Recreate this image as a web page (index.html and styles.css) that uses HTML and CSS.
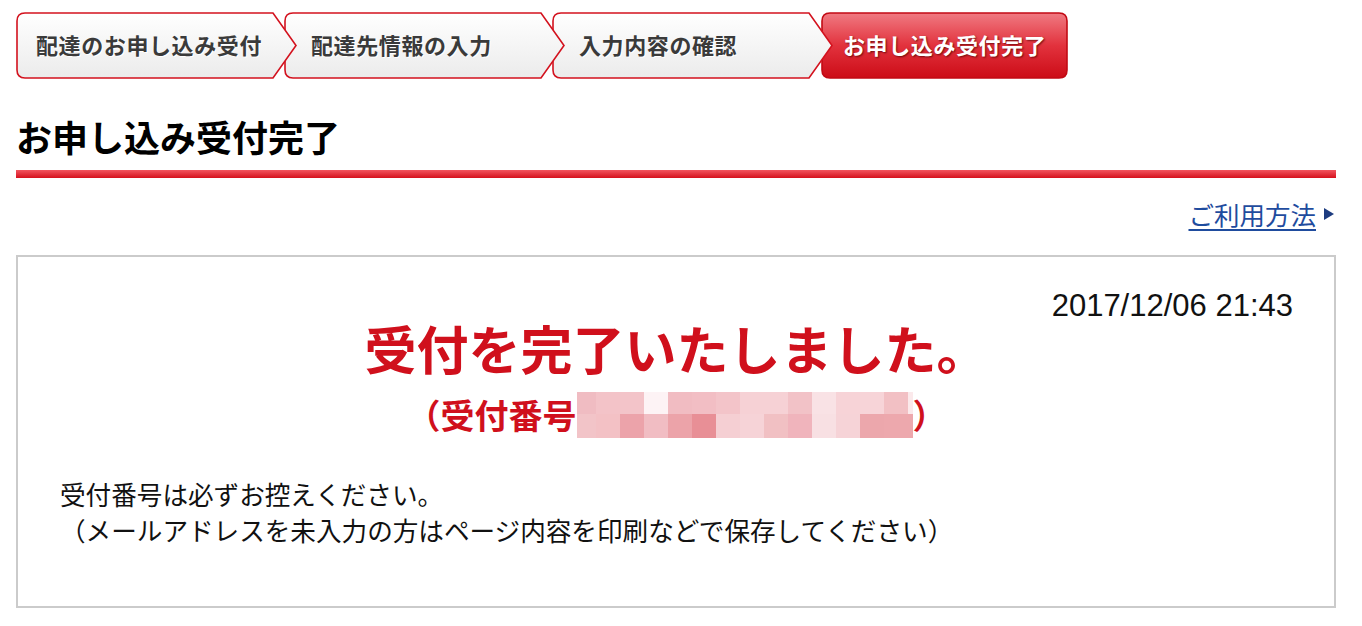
FILE: index.html
```html
<!DOCTYPE html>
<html lang="ja">
<head>
    <meta charset="UTF-8">
    <meta name="viewport" content="width=device-width, initial-scale=1.0">
    <title>お申し込み受付完了</title>
    <link rel="stylesheet" href="styles.css">
</head>
<body>
    <svg class="defs" width="0" height="0" aria-hidden="true">
        <defs>
            <linearGradient id="stepGray" x1="0" y1="0" x2="0" y2="1">
                <stop offset="0" stop-color="#ffffff"/>
                <stop offset="1" stop-color="#ebebeb"/>
            </linearGradient>
            <linearGradient id="stepRed" x1="0" y1="0" x2="0" y2="1">
                <stop offset="0" stop-color="#f07a82"/>
                <stop offset="0.5" stop-color="#e2323d"/>
                <stop offset="1" stop-color="#cc0c17"/>
            </linearGradient>
        </defs>
    </svg>
    <div class="page">
        <ol class="steps">
            <li class="step">
                <svg class="step-bg" viewBox="0 0 281 67" preserveAspectRatio="none"><path d="M9 1H257L280 33.5L257 66H9Q1 66 1 58V9Q1 1 9 1Z" fill="url(#stepGray)" stroke="#d3121e" stroke-width="1.6"/></svg>
                配達のお申し込み受付
            </li>
            <li class="step">
                <svg class="step-bg" viewBox="0 0 281 67" preserveAspectRatio="none"><path d="M9 1H257L280 33.5L257 66H9Q1 66 1 58V9Q1 1 9 1Z" fill="url(#stepGray)" stroke="#d3121e" stroke-width="1.6"/></svg>
                配達先情報の入力
            </li>
            <li class="step">
                <svg class="step-bg" viewBox="0 0 281 67" preserveAspectRatio="none"><path d="M9 1H257L280 33.5L257 66H9Q1 66 1 58V9Q1 1 9 1Z" fill="url(#stepGray)" stroke="#d3121e" stroke-width="1.6"/></svg>
                入力内容の確認
            </li>
            <li class="step current">
                <svg class="step-bg" viewBox="0 0 247 67" preserveAspectRatio="none"><path d="M9 1H238Q246 1 246 9V58Q246 66 238 66H9Q1 66 1 58V9Q1 1 9 1Z" fill="url(#stepRed)" stroke="#c20a14" stroke-width="1.6"/></svg>
                お申し込み受付完了
            </li>
        </ol>

        <h1 class="title">お申し込み受付完了</h1>

        <div class="help">
            <a href="#">ご利用方法</a>
            <span class="tri"></span>
        </div>

        <div class="box">
            <p class="date">2017/12/06 21:43</p>
            <p class="done">受付を完了いたしました。</p>
            <p class="number">（受付番号<svg class="mosaic" width="336" height="46" viewBox="0 0 336 46">
                <rect x="0" y="0" width="19" height="22" fill="#f0bcc2"/>
                <rect x="19" y="0" width="24" height="22" fill="#f3c3c8"/>
                <rect x="43" y="0" width="24" height="22" fill="#f3c4c9"/>
                <rect x="67" y="0" width="24" height="22" fill="#fdf3f5"/>
                <rect x="91" y="0" width="24" height="22" fill="#f1bcc2"/>
                <rect x="115" y="0" width="24" height="22" fill="#f2bec4"/>
                <rect x="139" y="0" width="24" height="22" fill="#f3c4c9"/>
                <rect x="163" y="0" width="24" height="22" fill="#f6d1d5"/>
                <rect x="187" y="0" width="24" height="22" fill="#f6d1d5"/>
                <rect x="211" y="0" width="24" height="22" fill="#f2c2c7"/>
                <rect x="235" y="0" width="24" height="22" fill="#f9e2e5"/>
                <rect x="259" y="0" width="24" height="22" fill="#f7d3d7"/>
                <rect x="283" y="0" width="24" height="22" fill="#f7d4d8"/>
                <rect x="307" y="0" width="24" height="22" fill="#f2c0c4"/>
                <rect x="331" y="0" width="5" height="22" fill="#fbe9eb"/>
                <rect x="0" y="22" width="19" height="24" fill="#f2c4c8"/>
                <rect x="19" y="22" width="24" height="24" fill="#f3c1c5"/>
                <rect x="43" y="22" width="24" height="24" fill="#eca3aa"/>
                <rect x="67" y="22" width="24" height="24" fill="#f1bdc3"/>
                <rect x="91" y="22" width="24" height="24" fill="#eca3a9"/>
                <rect x="115" y="22" width="24" height="24" fill="#e88f96"/>
                <rect x="139" y="22" width="24" height="24" fill="#f5cfd3"/>
                <rect x="163" y="22" width="24" height="24" fill="#f6d3d7"/>
                <rect x="187" y="22" width="24" height="24" fill="#f1c0c3"/>
                <rect x="211" y="22" width="24" height="24" fill="#f0b4bc"/>
                <rect x="235" y="22" width="24" height="24" fill="#f8e0e3"/>
                <rect x="259" y="22" width="24" height="24" fill="#f6d3d7"/>
                <rect x="283" y="22" width="24" height="24" fill="#eca7ac"/>
                <rect x="307" y="22" width="29" height="24" fill="#eda8ad"/>
            </svg>）</p>
            <p class="note">受付番号は必ずお控えください。<br>（メールアドレスを未入力の方はページ内容を印刷などで保存してください）</p>
        </div>
    </div>
</body>
</html>
```

FILE: styles.css
```css
body {
    margin: 0;
    font-family: "Noto Sans CJK JP", "Liberation Sans", sans-serif;
    color: #111;
    background: #fff;
}
.defs {
    position: absolute;
}
.page {
    padding: 12px 26px 0 16px;
}
.steps {
    display: flex;
    list-style: none;
    margin: 0;
    padding: 0;
}
.step {
    position: relative;
    display: flex;
    align-items: center;
    width: 281px;
    height: 67px;
    box-sizing: border-box;
    padding-left: 27px;
    padding-bottom: 3px;
    margin-left: -13px;
    font-size: 22px;
    font-weight: bold;
    color: #3a3a3a;
    text-shadow: 1px 1px 0 #fff;
    letter-spacing: 0.6px;
}
.step:nth-child(1) {
    margin-left: 0;
    padding-left: 20px;
    z-index: 4;
}
.step:nth-child(2) {
    z-index: 3;
}
.step:nth-child(3) {
    z-index: 2;
}
.step.current {
    z-index: 1;
    width: 247px;
    margin-left: -12px;
    padding-left: 22px;
    color: #fff;
    text-shadow: 1px 1px 2px rgba(90, 0, 0, 0.8);
}
.step-bg {
    position: absolute;
    left: 0;
    top: 0;
    width: 100%;
    height: 100%;
    z-index: -1;
}
.title {
    margin: 37px 0 0;
    font-size: 36px;
    line-height: 40px;
    font-weight: bold;
    color: #000;
}
.title::after {
    content: "";
    display: block;
    height: 8px;
    margin-top: 14px;
    background: linear-gradient(#f2555f, #d5111d);
}
.help {
    display: flex;
    justify-content: flex-end;
    align-items: center;
    gap: 8px;
    margin-top: 21px;
    font-size: 25.5px;
    line-height: 30px;
}
.help a {
    color: #1f4c9e;
    text-decoration: underline;
    text-decoration-thickness: 2px;
    text-underline-offset: 4px;
}
.tri {
    width: 0;
    height: 0;
    margin-right: 2px;
    border-top: 6px solid transparent;
    border-bottom: 6px solid transparent;
    border-left: 10px solid #1d3c80;
}
.box {
    margin-top: 26px;
    height: 353px;
    box-sizing: border-box;
    border: 2px solid #cbcbcb;
    padding: 34px 41px 0 42px;
}
.box p {
    margin: 0;
}
.date {
    text-align: right;
    font-family: "Liberation Sans", sans-serif;
    font-size: 31px;
    line-height: 30px;
    color: #111;
}
.done {
    margin-top: -8px;
    text-align: center;
    font-size: 52px;
    line-height: 54px;
    font-weight: bold;
    color: #d0101c;
}
.box .number {
    display: flex;
    justify-content: center;
    align-items: center;
    margin-top: 17px;
    font-size: 34px;
    line-height: 46px;
    font-weight: bold;
    color: #d0101c;
}
.mosaic {
    display: block;
}
.box .note {
    margin-top: 38px;
    font-size: 25.6px;
    line-height: 36px;
    color: #111;
}
```
